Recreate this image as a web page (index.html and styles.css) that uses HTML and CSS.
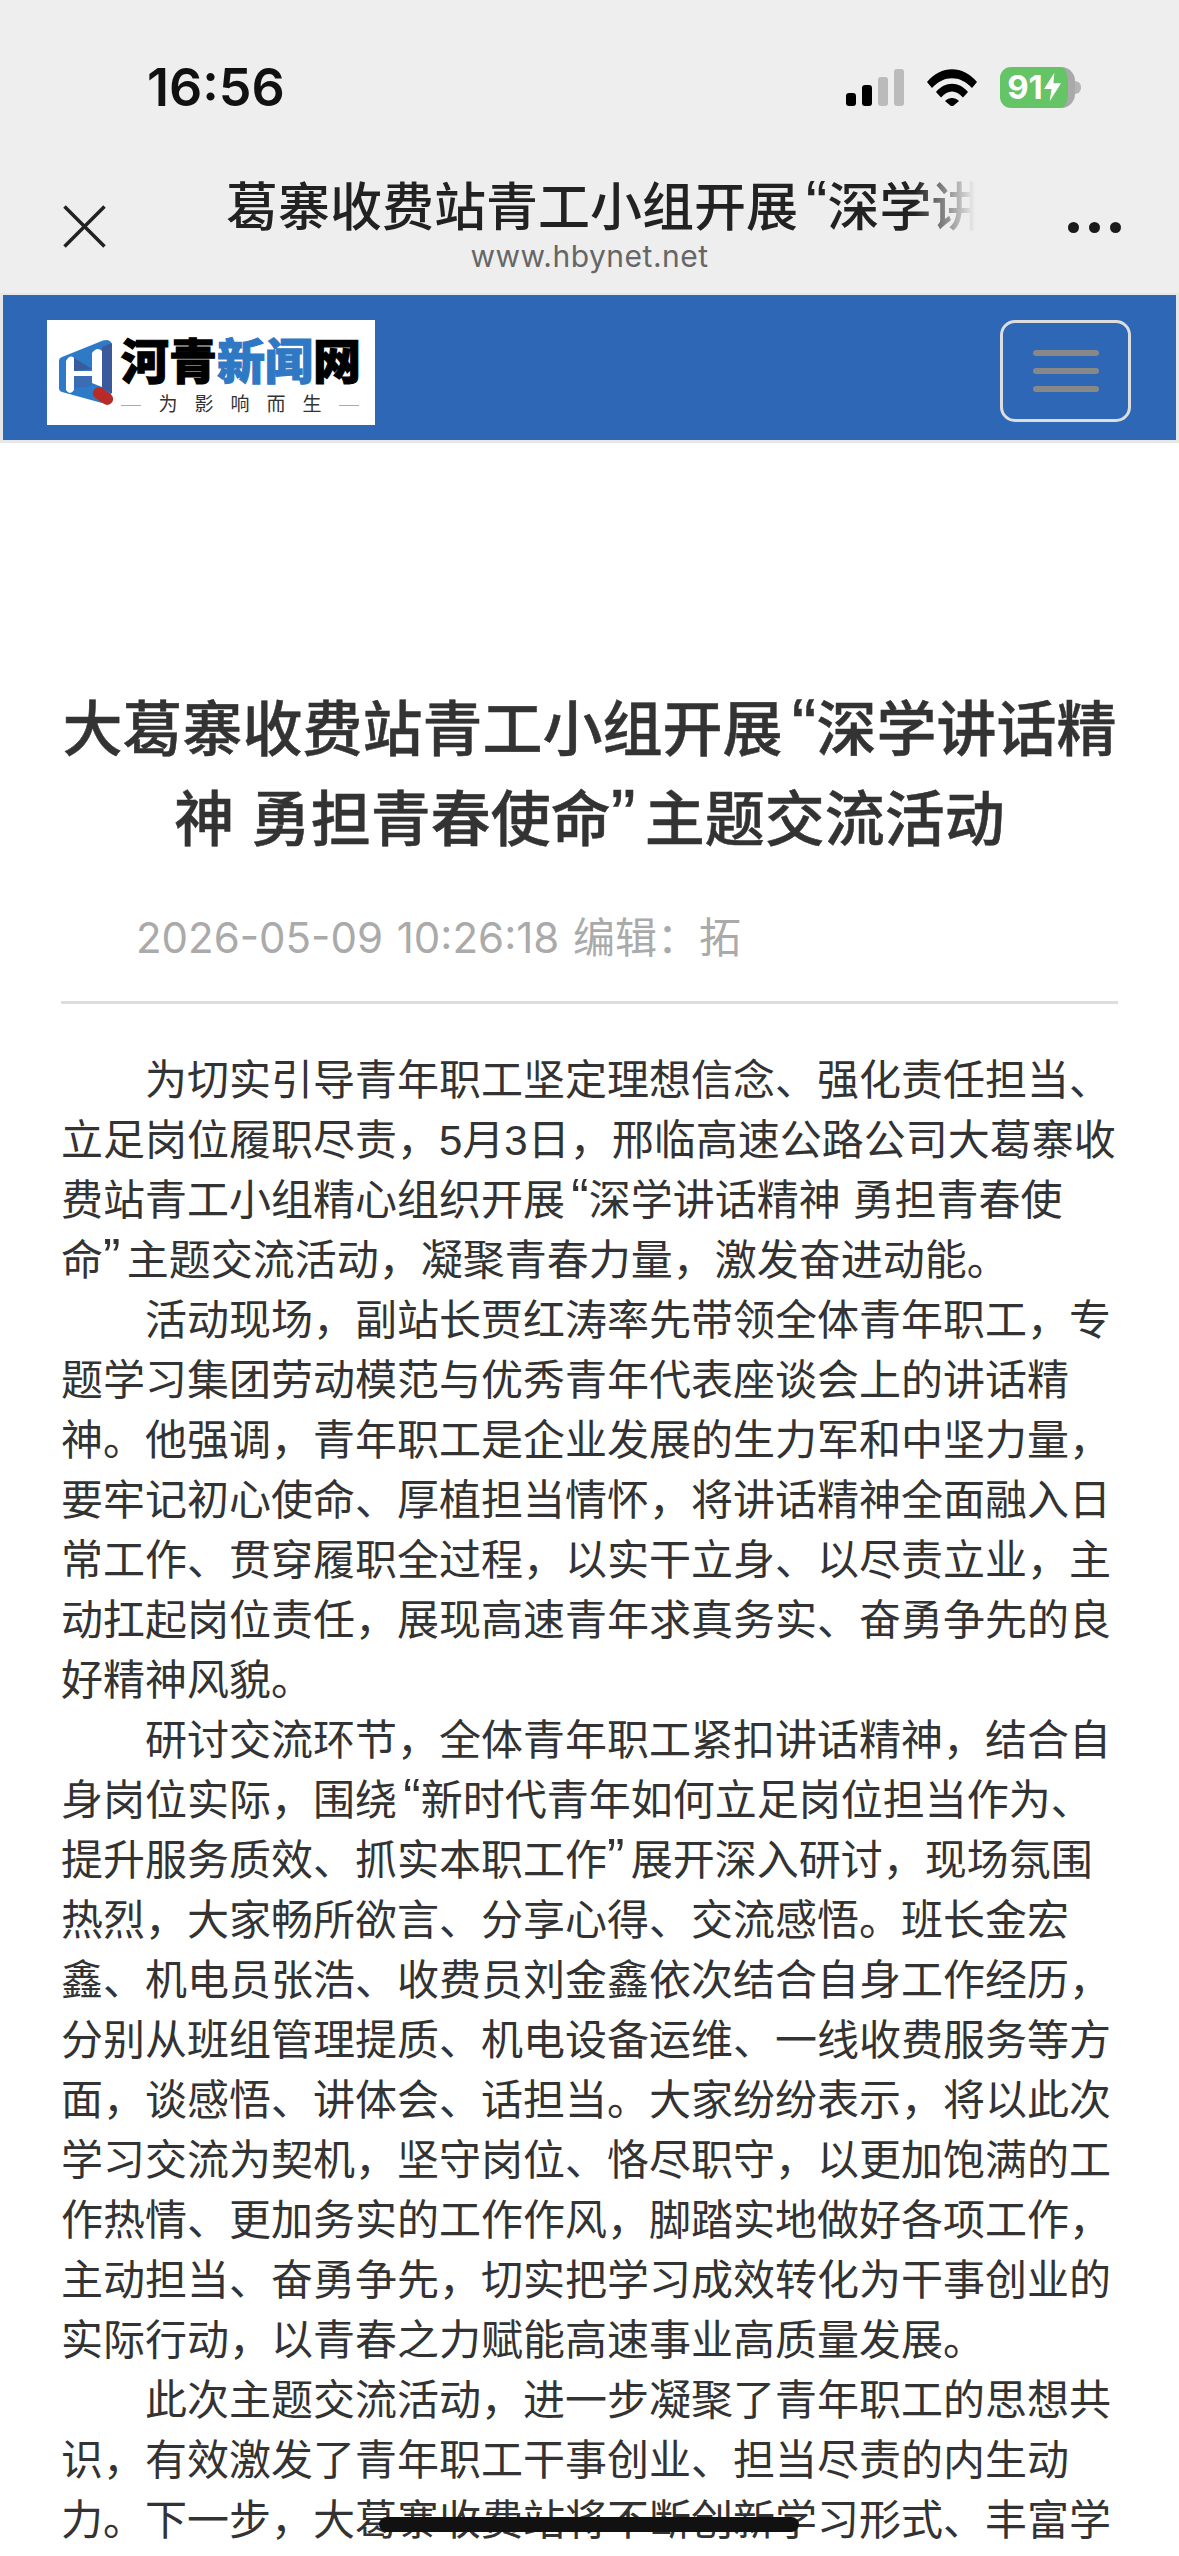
FILE: index.html
```html
<!DOCTYPE html>
<html lang="zh-CN">
<head>
    <meta charset="UTF-8">
    <meta name="viewport" content="width=device-width, initial-scale=1.0">
    <title>大葛寨收费站青工小组开展“深学讲话精神 勇担青春使命”主题交流活动</title>
    <link rel="stylesheet" href="styles.css">
</head>
<body>
    <header class="topbar">
        <div class="status">
            <span class="time">16:56</span>
            <div class="status-icons">
                <div class="signal">
                    <i class="bar bar1"></i>
                    <i class="bar bar2"></i>
                    <i class="bar bar3"></i>
                    <i class="bar bar4"></i>
                </div>
                <svg class="wifi" viewBox="0 0 50 37">
                    <path d="M0 13 C14 -4 36 -4 50 13 L45 19 C33 6 17 6 5 19 Z"/>
                    <path d="M9 23 C18 12 32 12 41 23 L36 28.500 C29 20.500 21 20.500 14 28.500 Z"/>
                    <path d="M18 32 C22 28 28 28 32 32 L25 38 Z"/>
                </svg>
                <div class="battery">
                    <div class="battery-body">
                        <span class="battery-num">91</span>
                        <svg class="bolt" viewBox="0 0 18 30">
                            <path d="M11 0 L0 17 L8 17 L6 30 L18 11 L10 11 Z"/>
                        </svg>
                    </div>
                    <i class="battery-tip"></i>
                </div>
            </div>
        </div>
        <div class="webnav">
            <svg class="close" viewBox="0 0 43 43">
                <path d="M1.500 1.500 L41.500 41.500 M41.500 1.500 L1.500 41.500"/>
            </svg>
            <div class="webnav-title">
                <div class="page-name">葛寨收费站青工小组开展<span class="q-open">“</span>深学讲</div>
                <div class="page-url">www.hbynet.net</div>
            </div>
            <div class="dots"><i></i><i></i><i></i></div>
        </div>
    </header>

    <nav class="navbar">
        <div class="logo">
            <svg class="logo-mark" viewBox="0 0 54 66">
                <path class="mark-base" d="M3 18 L44 1.500 Q53 -1 53 8 L53 54 L43 64 L3 53 Q0 52 0 49 L0 22 Q0 19 3 18 Z"/>
                <path class="mark-dark" d="M43 8 L53 4 L53 54 L43 50 Z"/>
                <path class="mark-dark" d="M15 19 L33 30 L15 32 Z"/>
                <path class="mark-mid" d="M15 37 L33 37 L33 47 L15 49 Z"/>
                <path class="mark-white" d="M7 22 Q11 15 15 19 L15 32 L33 32 L33 14 Q38 7 43 12 L43 48 L33 44 L33 37 L15 37 L15 51 Q11 57 7 51 Z"/>
                <rect class="mark-red" x="33" y="51" width="22" height="12" rx="6" transform="rotate(35 44 57)"/>
            </svg>
            <div class="logo-words">
                <div class="logo-name">河青<span class="logo-blue">新闻</span>网</div>
                <div class="logo-slogan">
                    <i class="slogan-line"></i>
                    <span>为</span><span>影</span><span>响</span><span>而</span><span>生</span>
                    <i class="slogan-line"></i>
                </div>
            </div>
        </div>
        <button class="toggle"><i></i><i></i><i></i></button>
    </nav>

    <main class="article">
        <h1>大葛寨收费站青工小组开展<span class="q-open">“</span>深学讲话精神 勇担青春使命<span class="q-close">”</span>主题交流活动</h1>
        <div class="meta">2026-05-09 10:26:18 编辑：拓</div>
        <p>为切实引导青年职工坚定理想信念、强化责任担当、立足岗位履职尽责，5月3日，邢临高速公路公司大葛寨收费站青工小组精心组织开展<span class="q-open">“</span>深学讲话精神 勇担青春使命<span class="q-close">”</span>主题交流活动，凝聚青春力量，激发奋进动能。</p>
        <p>活动现场，副站长贾红涛率先带领全体青年职工，专题学习集团劳动模范与优秀青年代表座谈会上的讲话精神。他强调，青年职工是企业发展的生力军和中坚力量，要牢记初心使命、厚植担当情怀，将讲话精神全面融入日常工作、贯穿履职全过程，以实干立身、以尽责立业，主动扛起岗位责任，展现高速青年求真务实、奋勇争先的良好精神风貌。</p>
        <p>研讨交流环节，全体青年职工紧扣讲话精神，结合自身岗位实际，围绕<span class="q-open">“</span>新时代青年如何立足岗位担当作为、提升服务质效、抓实本职工作<span class="q-close">”</span>展开深入研讨，现场氛围热烈，大家畅所欲言、分享心得、交流感悟。班长金宏鑫、机电员张浩、收费员刘金鑫依次结合自身工作经历，分别从班组管理提质、机电设备运维、一线收费服务等方面，谈感悟、讲体会、话担当。大家纷纷表示，将以此次学习交流为契机，坚守岗位、恪尽职守，以更加饱满的工作热情、更加务实的工作作风，脚踏实地做好各项工作，主动担当、奋勇争先，切实把学习成效转化为干事创业的实际行动，以青春之力赋能高速事业高质量发展。</p>
        <p>此次主题交流活动，进一步凝聚了青年职工的思想共识，有效激发了青年职工干事创业、担当尽责的内生动力。下一步，大葛寨收费站将不断创新学习形式、丰富学</p>
    </main>

    <div class="home-bar"></div>
</body>
</html>
```

FILE: styles.css
```css
html, body {
    margin: 0;
    height: 2556px;
    overflow: hidden;
}
body {
    position: relative;
    background: #fff;
    font-family: "Liberation Sans", "Noto Sans CJK SC", sans-serif;
    color: #333;
}
i {
    display: block;
}

/* curly quotes: a bit bigger than the font gives, little air on the outer side */
.q-open {
    font-size: 1.25em;
    line-height: 0;
    padding-left: 0.12em;
}
.q-close {
    font-size: 1.25em;
    line-height: 0;
    padding-right: 0.12em;
}

/* top grey area */
.topbar {
    background: #eeeeee;
    height: 293px;
}
.status {
    height: 174px;
    box-sizing: border-box;
    padding: 0 98px 0 147px;
    display: flex;
    justify-content: space-between;
    align-items: center;
}
.time {
    font-family: Inter, sans-serif;
    font-size: 52px;
    font-weight: 600;
    color: #111;
}
.status-icons {
    display: flex;
    align-items: center;
    gap: 23px;
}
.signal {
    display: flex;
    align-items: flex-end;
    gap: 6px;
    height: 37px;
}
.bar {
    width: 10px;
    background: #000;
    border-radius: 3px;
}
.bar1 { height: 13px; }
.bar2 { height: 21px; }
.bar3 { height: 29px; background: #bbb; }
.bar4 { height: 37px; background: #bbb; }
.wifi {
    width: 50px;
    height: 37px;
    fill: #000;
}
.battery {
    display: flex;
    align-items: center;
}
.battery-body {
    width: 75px;
    height: 41px;
    box-sizing: border-box;
    background: #65c466;
    border-right: 7px solid #a9a9a9;
    border-radius: 11px 14px 14px 11px;
    display: flex;
    align-items: center;
    justify-content: center;
    gap: 1px;
    color: #fff;
}
.battery-num {
    font-family: Inter, sans-serif;
    font-size: 33px;
    font-weight: 700;
}
.bolt {
    width: 17px;
    height: 30px;
    fill: #fff;
}
.battery-tip {
    width: 6px;
    height: 13px;
    background: #b5b5b5;
    border-radius: 0 6px 6px 0;
}

.webnav {
    height: 119px;
    display: flex;
    padding-left: 63px;
}
.close {
    width: 43px;
    height: 43px;
    margin-top: 31px;
    fill: none;
    stroke: #222;
    stroke-width: 3.5;
}
.webnav-title {
    width: 749px;
    margin-left: 120px;
    padding-top: 3px;
    text-align: center;
}
.page-name {
    font-size: 52px;
    font-weight: 500;
    line-height: 62px;
    color: #222;
    white-space: nowrap;
    text-align: left;
    -webkit-mask-image: linear-gradient(to right, #000 calc(100% - 60px), transparent);
    mask-image: linear-gradient(to right, #000 calc(100% - 60px), transparent);
}
.page-url {
    font-family: Inter, sans-serif;
    font-size: 30px;
    line-height: 34px;
    color: #666;
    letter-spacing: 0.5px;
    padding-right: 22px;
}
.dots {
    display: flex;
    gap: 10px;
    margin: 48px 0 0 93px;
    height: 11px;
}
.dots i {
    width: 11px;
    height: 11px;
    border-radius: 50%;
    background: #1a1a1a;
}

/* blue site header */
.navbar {
    height: 150px;
    box-sizing: border-box;
    background: #2d67b6;
    border: 3px solid #e7e7e7;
    border-top-width: 2px;
    padding: 25px 45px 0 44px;
    display: flex;
    justify-content: space-between;
    align-items: flex-start;
}
.logo {
    width: 328px;
    height: 105px;
    background: #fff;
    display: flex;
    box-sizing: border-box;
    padding: 19px 0 0 12px;
    gap: 8px;
}
.logo-mark {
    width: 54px;
    height: 66px;
}
.mark-base { fill: #2f7ac6; }
.mark-dark { fill: #3b5a9b; }
.mark-mid { fill: #3a6db3; }
.mark-white { fill: #fff; }
.mark-red { fill: #b92b27; }
.logo-name {
    font-size: 48px;
    line-height: 48px;
    font-weight: 900;
    color: #000;
    -webkit-text-stroke: 1.2px currentColor;
    white-space: nowrap;
}
.logo-blue {
    color: #2f78c4;
}
.logo-slogan {
    display: flex;
    align-items: center;
    gap: 17px;
    margin-top: 8px;
    width: 238px;
    height: 20px;
    font-size: 19px;
    line-height: 20px;
    color: #333;
}
.slogan-line {
    flex: 1;
    height: 1px;
    background: #aaa;
}
.toggle {
    width: 131px;
    height: 102px;
    box-sizing: border-box;
    background: transparent;
    border: 3px solid #ddd;
    border-radius: 15px;
    padding: 0;
    display: flex;
    flex-direction: column;
    justify-content: center;
    align-items: center;
    gap: 12px;
}
.toggle i {
    width: 66px;
    height: 6px;
    background: #888;
    border-radius: 3px;
}

/* article */
.article {
    padding: 243px 61px 0 61px;
}
h1 {
    margin: 0;
    font-size: 60px;
    line-height: 90px;
    font-weight: 500;
    text-align: center;
    color: #333;
    -webkit-text-stroke: 0.5px #333;
}
.meta {
    margin: 42px 0 47px;
    padding: 0 0 33px 75px;
    border-bottom: 3px solid #ddd;
    font-family: Inter, "Noto Sans CJK SC", sans-serif;
    font-size: 42px;
    line-height: 60px;
    word-spacing: 2px;
    color: #aaa;
}
p {
    margin: 0;
    font-size: 42px;
    line-height: 60px;
    text-indent: 2em;
    color: #333;
}

/* phone home indicator */
.home-bar {
    position: absolute;
    left: 379px;
    bottom: 24px;
    width: 420px;
    height: 15px;
    background: #111;
    border-radius: 8px;
}
```
